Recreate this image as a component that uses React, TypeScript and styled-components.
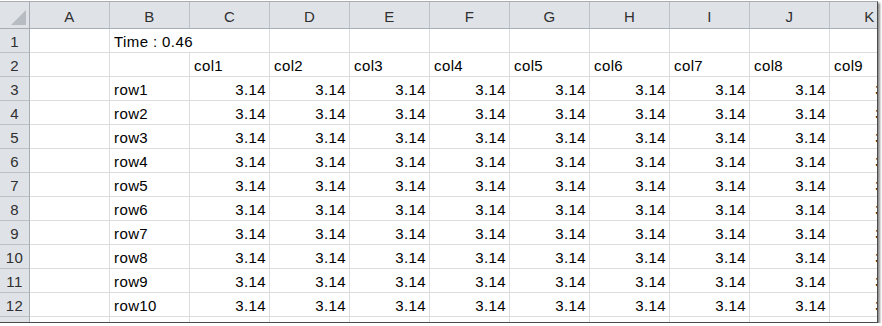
import styled, { createGlobalStyle } from 'styled-components';

const GlobalStyle = createGlobalStyle`
  html, body {
    margin: 0;
    padding: 0;
    background: #ffffff;
  }
  body {
    font-family: 'Liberation Sans', Arial, sans-serif;
  }
`;

const COLS = ['A', 'B', 'C', 'D', 'E', 'F', 'G', 'H', 'I', 'J', 'K'];

const Frame = styled.div`
  margin-top: 1px;
  width: 877px;
  height: 320px;
  border-top: 1px solid #a9adb2;
  border-bottom: 1px solid #4a4a4a;
  border-right: 1px solid #4a4a4a;
  box-shadow: 2px 2px 2px rgba(0, 0, 0, 0.45);
  overflow: hidden;
  background: #fff;
`;

const Sheet = styled.div`
  display: grid;
  grid-template-columns: 30px repeat(11, 80px);
  grid-template-rows: 27px;
  grid-auto-rows: 24px;
  font-size: 15px;
  letter-spacing: 0.4px;
  color: #000;
`;

const HeaderCell = styled.div`
  height: 27px;
  box-sizing: border-box;
  background: #dfe3e8;
  border-bottom: 1px solid #a6adb5;
  border-right: 1px solid #bcc1c7;
  display: flex;
  align-items: center;
  justify-content: center;
  padding-top: 2px;
  color: #2f2f2f;
  line-height: 1;
`;

const Corner = styled(HeaderCell)`
  align-items: flex-end;
  justify-content: flex-end;
  padding: 0 3px 3px 0;
  border-right: 1px solid #a6adb5;
`;

const Triangle = styled.span`
  width: 15px;
  height: 15px;
  background: #b7bcc2;
  clip-path: polygon(100% 0, 100% 100%, 0 100%);
`;

const Row = styled.div`
  display: contents;
`;

const RowHead = styled.div`
  box-sizing: border-box;
  height: 24px;
  background: #dfe3e8;
  border-right: 1px solid #a6adb5;
  border-bottom: 1px solid #bcc1c7;
  text-align: center;
  line-height: 23px;
  padding-top: 1px;
  color: #2f2f2f;
`;

const Cell = styled.div<{ $align?: 'left' | 'right'; $spill?: boolean }>`
  box-sizing: border-box;
  height: 24px;
  border-bottom: 1px solid #dadcdd;
  border-right: ${(p) => (p.$spill ? 'none' : '1px solid #dadcdd')};
  line-height: 23px;
  padding: 1px 3px 0 4px;
  text-align: ${(p) => p.$align ?? 'left'};
  white-space: nowrap;
  overflow: ${(p) => (p.$spill ? 'visible' : 'hidden')};
  position: ${(p) => (p.$spill ? 'relative' : 'static')};
  z-index: ${(p) => (p.$spill ? 1 : 'auto')};
`;

type CellData = { text?: string; align?: 'left' | 'right'; spill?: boolean };

function buildRows(): CellData[][] {
  const rows: CellData[][] = [];
  const blank = (): CellData[] => COLS.map(() => ({}));

  const r1 = blank();
  r1[1] = { text: 'Time : 0.46', spill: true };
  rows.push(r1);

  const r2 = blank();
  for (let c = 2; c < COLS.length; c++) r2[c] = { text: `col${c - 1}` };
  rows.push(r2);

  for (let i = 1; i <= 10; i++) {
    const r = blank();
    r[1] = { text: `row${i}` };
    for (let c = 2; c < COLS.length; c++) r[c] = { text: '3.14', align: 'right' };
    rows.push(r);
  }

  rows.push(blank());
  return rows;
}

const rows = buildRows();

export default function App() {
  return (
    <>
      <GlobalStyle />
      <Frame>
        <Sheet>
          <Row>
            <Corner>
              <Triangle />
            </Corner>
            {COLS.map((c) => (
              <HeaderCell key={c}>{c}</HeaderCell>
            ))}
          </Row>
          {rows.map((row, ri) => (
            <Row key={ri}>
              <RowHead>{ri + 1}</RowHead>
              {row.map((cell, ci) => (
                <Cell key={ci} $align={cell.align} $spill={cell.spill}>
                  {cell.text}
                </Cell>
              ))}
            </Row>
          ))}
        </Sheet>
      </Frame>
    </>
  );
}
